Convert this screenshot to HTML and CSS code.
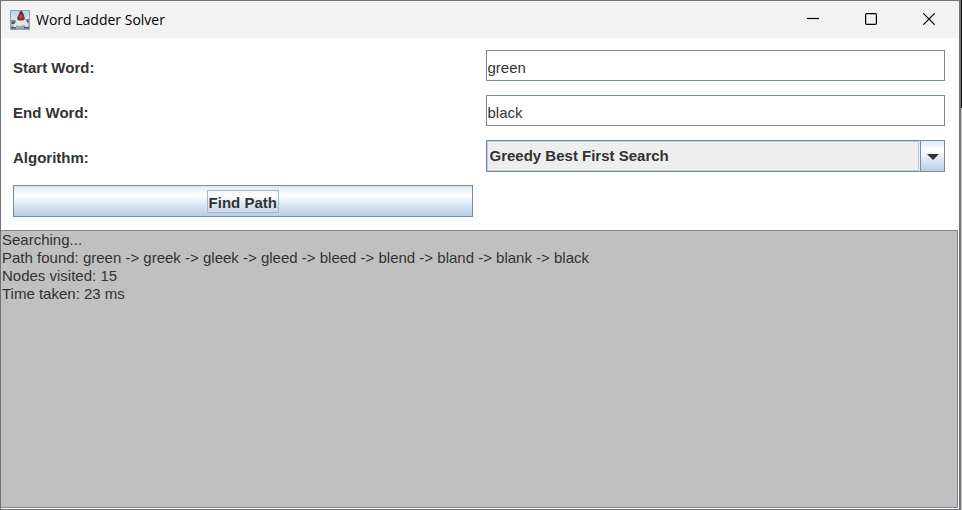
FILE: index.html
```html
<!DOCTYPE html>
<html lang="en">
<head>
<meta charset="utf-8">
<title>Word Ladder Solver</title>
<link rel="stylesheet" href="styles.css">
</head>
<body>
<main class="window">
  <header class="titlebar">
    <svg class="app-icon" viewBox="0 0 20 20" aria-hidden="true">
      <defs>
        <linearGradient id="sky" x1="0" y1="0" x2="0" y2="1">
          <stop offset="0" stop-color="#bccfe0"/>
          <stop offset="0.5" stop-color="#dfe6ec"/>
          <stop offset="1" stop-color="#8098ae"/>
        </linearGradient>
      </defs>
      <rect x="0.5" y="0.5" width="19" height="19" fill="url(#sky)" stroke="#8ea5ba"/>
      <path d="M1 10h4l2 2-2 2H1zM14 9h5v4h-4z" fill="#7b8996"/>
      <path d="M2 12h3v2H2zM15 11h3v1h-3z" fill="#46525d"/>
      <path d="M7 8l-1 4-3 3 1 2h13l1-1-1-4-3-5z" fill="#e6e6e4"/>
      <path d="M10 1h2l2 4 1 4-2 1.500H8L7 8l2-4z" fill="#46424a"/>
      <path d="M6 15l3 1 5-1 2 1-1 2H6z" fill="#a4a7a9"/>
      <path d="M1 17h5v1.500H1zM14 17h5v1.500h-5z" fill="#4c5a67"/>
      <circle cx="11" cy="7" r="2.400" fill="#cf2620"/>
      <circle cx="11" cy="6.500" r="1" fill="#f23c30"/>
    </svg>
    <h1 class="title">Word Ladder Solver</h1>
    <div class="controls">
      <button class="control" type="button" aria-label="Minimize">
        <svg viewBox="0 0 12 12"><path d="M0 5.500h12"/></svg>
      </button>
      <button class="control" type="button" aria-label="Maximize">
        <svg viewBox="0 0 12 12"><rect x="0.600" y="0.600" width="10.800" height="10.800" rx="1.200"/></svg>
      </button>
      <button class="control" type="button" aria-label="Close">
        <svg viewBox="0 0 12 12"><path d="M0.300 0.300l11.400 11.400M11.700 0.300L0.300 11.700"/></svg>
      </button>
    </div>
  </header>
  <form class="form">
    <label class="label" for="start">Start Word:</label>
    <input class="field" id="start" type="text" value="green">
    <label class="label" for="end">End Word:</label>
    <input class="field" id="end" type="text" value="black">
    <label class="label" for="algorithm">Algorithm:</label>
    <div class="combo">
      <select class="combo-select" id="algorithm">
        <option>Greedy Best First Search</option>
      </select>
      <span class="combo-arrow"><svg viewBox="0 0 12 6"><path d="M0 0h12L6 6z"/></svg></span>
    </div>
    <button class="find" type="button"><span class="find-text">Find Path</span></button>
  </form>
  <textarea class="results" aria-label="Results" readonly>Searching...
Path found: green -&gt; greek -&gt; gleek -&gt; gleed -&gt; bleed -&gt; blend -&gt; bland -&gt; blank -&gt; black
Nodes visited: 15
Time taken: 23 ms</textarea>
</main>
<div class="backdrop"></div>
</body>
</html>
```
FILE: styles.css
```css
* {
  box-sizing: border-box;
}

body {
  display: flex;
  height: 100vh;
  margin: 0;
  overflow: hidden;
  color: #333;
  font: 15px/18px "Liberation Sans", Arial, sans-serif;
}

.window {
  display: flex;
  flex: 1;
  flex-direction: column;
  min-width: 0;
  border: 1px solid #737373;
  border-right-width: 2px;
  background: #fff;
}

.titlebar {
  display: flex;
  flex: none;
  align-items: center;
  height: 37px;
  padding: 0 1px 0 9px;
  background: #f2f2f2;
}

.app-icon {
  width: 20px;
  height: 20px;
}

.title {
  flex: 1;
  margin: 0 0 0 6px;
  color: #000;
  font: 400 14px/20px "Open Sans", "Segoe UI", sans-serif;
}

.controls {
  display: flex;
  height: 100%;
}

.control {
  display: grid;
  place-items: center;
  width: 58px;
  padding: 0 0 2px;
  border: 0;
  background: none;
}

.control svg {
  width: 12px;
  height: 12px;
  fill: none;
  stroke: #000;
  stroke-width: 1.2;
}

.form {
  display: grid;
  flex: none;
  grid-template-columns: 1fr 1fr;
  grid-auto-rows: 32px;
  gap: 13px;
  padding: 12px 14px 13px 12px;
}

.label {
  align-self: center;
  padding-top: 3px;
  font-weight: 700;
}

.field {
  width: 100%;
  height: 31px;
  padding: 3px 1px 0;
  border: 1px solid #7a8a99;
  border-radius: 0;
  outline: 0;
  background: #fff;
  color: #333;
  font: inherit;
}

.combo {
  display: flex;
  border: 1px solid #7a8a99;
  background: #eee;
}

.combo-select {
  flex: 1;
  min-width: 0;
  padding: 0 2px;
  border: 1px solid #b8cfe5;
  border-radius: 0;
  outline: 0;
  appearance: none;
  background: #eee;
  color: #333;
  font: inherit;
  font-weight: 700;
}

.combo-arrow {
  display: grid;
  place-items: center;
  width: 24px;
  margin-left: 1px;
  border-left: 1px solid #7a8a99;
  background: linear-gradient(#dde8f3, #fff 30%, #dde8f3 60%, #b8cfe5);
  pointer-events: none;
}

.combo-arrow svg {
  width: 12px;
  height: 6px;
  margin-top: 2px;
  fill: #333;
}

.find {
  padding: 0;
  border: 1px solid #7a8a99;
  background: linear-gradient(#dde8f3, #fff 30%, #dde8f3 60%, #b8cfe5);
  color: #333;
  font: inherit;
  font-weight: 700;
}

.find-text {
  display: inline-block;
  padding: 3px 1px 0;
  border: 1px solid #a3b8cc;
}

.results {
  flex: 1;
  min-height: 0;
  margin: 0 1px 1px 0;
  padding: 0 1px;
  border: 1px solid #7a8a99;
  border-left-width: 0;
  outline: 0;
  resize: none;
  background: #c0c0c0;
  color: #333;
  font: inherit;
}

.backdrop {
  width: 1px;
  background: linear-gradient(#111 0 108px, #c8c8c8 108px);
}
```
